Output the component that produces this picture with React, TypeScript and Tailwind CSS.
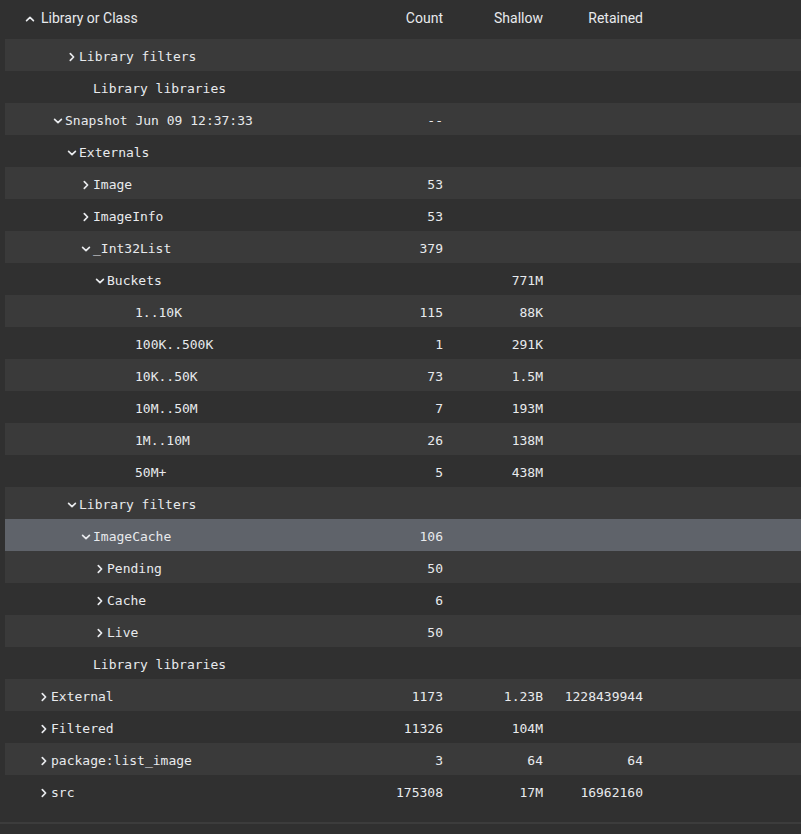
import React from 'react';

type Row = {
  name: string;
  level: number;
  open?: boolean; // undefined = leaf
  count?: string;
  shallow?: string;
  retained?: string;
  selected?: boolean;
};

const rows: Row[] = [
  { name: 'Library filters', level: 2, open: false },
  { name: 'Library libraries', level: 2 },
  { name: 'Snapshot Jun 09 12:37:33', level: 1, open: true, count: '--' },
  { name: 'Externals', level: 2, open: true },
  { name: 'Image', level: 3, open: false, count: '53' },
  { name: 'ImageInfo', level: 3, open: false, count: '53' },
  { name: '_Int32List', level: 3, open: true, count: '379' },
  { name: 'Buckets', level: 4, open: true, shallow: '771M' },
  { name: '1..10K', level: 5, count: '115', shallow: '88K' },
  { name: '100K..500K', level: 5, count: '1', shallow: '291K' },
  { name: '10K..50K', level: 5, count: '73', shallow: '1.5M' },
  { name: '10M..50M', level: 5, count: '7', shallow: '193M' },
  { name: '1M..10M', level: 5, count: '26', shallow: '138M' },
  { name: '50M+', level: 5, count: '5', shallow: '438M' },
  { name: 'Library filters', level: 2, open: true },
  { name: 'ImageCache', level: 3, open: true, count: '106', selected: true },
  { name: 'Pending', level: 4, open: false, count: '50' },
  { name: 'Cache', level: 4, open: false, count: '6' },
  { name: 'Live', level: 4, open: false, count: '50' },
  { name: 'Library libraries', level: 2 },
  { name: 'External', level: 0, open: false, count: '1173', shallow: '1.23B', retained: '1228439944' },
  { name: 'Filtered', level: 0, open: false, count: '11326', shallow: '104M' },
  { name: 'package:list_image', level: 0, open: false, count: '3', shallow: '64', retained: '64' },
  { name: 'src', level: 0, open: false, count: '175308', shallow: '17M', retained: '16962160' },
];

function Chevron({ dir }: { dir: 'right' | 'down' | 'up' }) {
  const d =
    dir === 'right' ? 'M4.3 2.6 L7.6 6 L4.3 9.4' : dir === 'down' ? 'M2.6 4.4 L6 7.7 L9.4 4.4' : 'M2.6 7.6 L6 4.3 L9.4 7.6';
  return (
    <svg width="12" height="12" viewBox="0 0 12 12" className="shrink-0">
      <path d={d} fill="none" stroke="#e8eaed" strokeWidth="1.7" strokeLinecap="round" strokeLinejoin="round" />
    </svg>
  );
}

const mono = { fontFamily: '"DejaVu Sans Mono", "Liberation Mono", monospace' };

function TreeRow({ row, index }: { row: Row; index: number }) {
  const bg = row.selected ? 'bg-[#5f636a]' : index % 2 === 0 ? 'bg-[#3a3a3a]' : 'bg-[#303030]';
  const leaf = row.open === undefined;
  const pad = 33 + 14 * row.level + (leaf ? 14 : 0);
  return (
    <div className={`flex h-8 items-center pt-[3px] text-[13px] text-[#e8eaed] ${bg}`} style={mono}>
      <div className="flex w-[338px] items-center" style={{ paddingLeft: pad }}>
        {leaf ? <span className="w-[13px] shrink-0" /> : (
          <span className="mr-px flex">
            <Chevron dir={row.open ? 'down' : 'right'} />
          </span>
        )}
        <span className="whitespace-pre">{row.name}</span>
      </div>
      <div className="w-[100px] text-right">{row.count}</div>
      <div className="w-[100px] text-right">{row.shallow}</div>
      <div className="w-[100px] text-right">{row.retained}</div>
      <div className="flex-1" />
    </div>
  );
}

export default function App() {
  return (
    <div className="h-[834px] w-[801px] overflow-hidden bg-[#303030]" style={{ fontFamily: 'Roboto, "Noto Sans", sans-serif' }}>
      {/* Header */}
      <div className="flex h-[39px] items-center pb-[2px] pl-[5px] text-[14px] text-[#e8eaed]">
        <div className="flex w-[338px] items-center pl-[19px]">
          <span className="mr-[5px] flex">
            <Chevron dir="up" />
          </span>
          <span>Library or Class</span>
        </div>
        <div className="w-[100px] text-right">Count</div>
        <div className="w-[100px] text-right">Shallow</div>
        <div className="w-[100px] text-right">Retained</div>
        <div className="flex-1" />
      </div>

      {/* Tree rows */}
      <div className="pl-[5px]">
        {rows.map((row, i) => (
          <TreeRow key={i} row={row} index={i} />
        ))}
      </div>

      <div className="h-[15px]" />
      <div className="h-[2px] bg-[#3c3c3c]" />
    </div>
  );
}
